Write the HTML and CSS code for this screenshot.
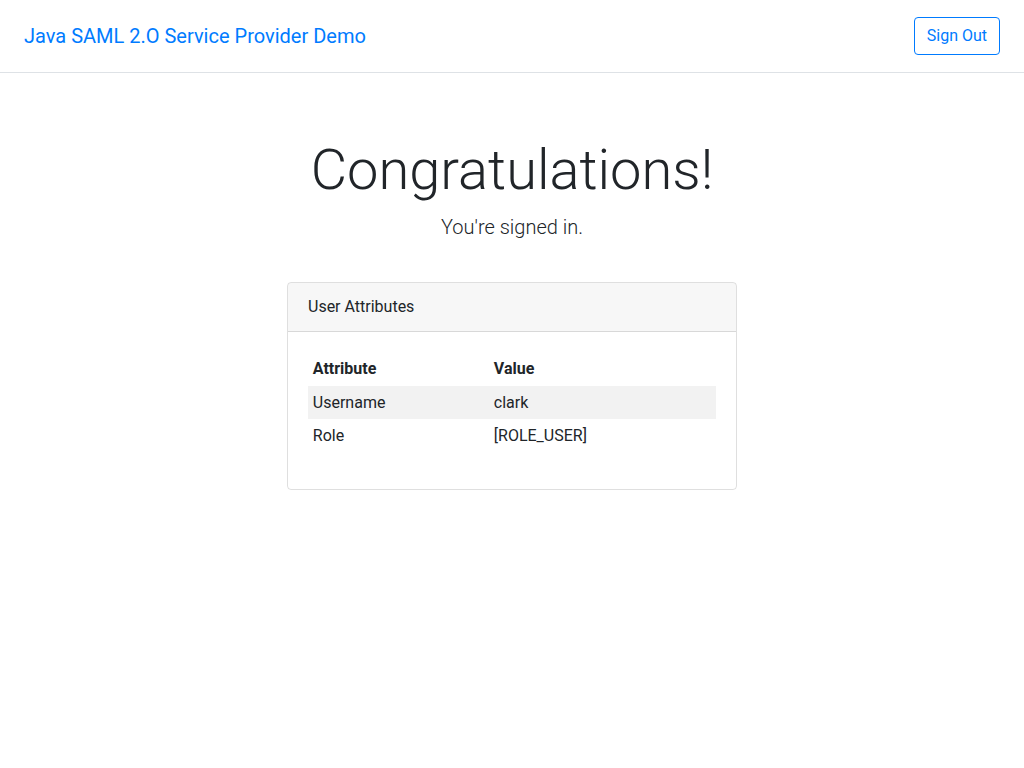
FILE: index.html
```html
<!DOCTYPE html>
<html lang="en">
<head>
<meta charset="utf-8">
<title>Java SAML 2.0 Service Provider Demo</title>
<link rel="stylesheet" href="styles.css">
</head>
<body>
<nav class="navbar">
  <a class="brand" href="#">Java SAML 2.O Service Provider Demo</a>
  <button class="btn-outline">Sign Out</button>
</nav>
<main class="main">
  <h1 class="display">Congratulations!</h1>
  <p class="lead">You're signed in.</p>
  <div class="card">
    <div class="card-header">User Attributes</div>
    <div class="card-body">
      <table class="table">
        <thead>
          <tr><th class="col-attr">Attribute</th><th>Value</th></tr>
        </thead>
        <tbody>
          <tr class="striped"><td>Username</td><td>clark</td></tr>
          <tr><td>Role</td><td>[ROLE_USER]</td></tr>
        </tbody>
      </table>
    </div>
  </div>
</main>
</body>
</html>
```
FILE: styles.css
```css
* { box-sizing: border-box; }
body {
  margin: 0;
  font-family: Roboto, "Liberation Sans", sans-serif;
  font-size: 16px;
  line-height: 1.5;
  color: #212529;
  background: #fff;
}
.navbar {
  display: flex;
  align-items: center;
  justify-content: space-between;
  padding: 16px 24px;
  border-bottom: 1px solid #dee2e6;
}
.brand {
  font-size: 20px;
  line-height: 30px;
  padding: 5px 0;
  color: #007bff;
  text-decoration: none;
}
.btn-outline {
  font-family: inherit;
  font-size: 16px;
  line-height: 24px;
  padding: 6px 12px;
  color: #007bff;
  background: transparent;
  border: 1px solid #007bff;
  border-radius: 4px;
}
.main {
  display: flex;
  flex-direction: column;
  align-items: center;
  padding-top: 64px;
}
.display {
  margin: 0 0 8px;
  font-size: 56px;
  font-weight: 300;
  line-height: 1.2;
}
.lead {
  margin: 0 0 40px;
  font-size: 20px;
  font-weight: 300;
  line-height: 30px;
}
.card {
  width: 450px;
  border: 1px solid rgba(0,0,0,.125);
  border-radius: 4px;
  overflow: hidden;
}
.card-header {
  padding: 12px 20px;
  background: rgba(0,0,0,.03);
  border-bottom: 1px solid rgba(0,0,0,.125);
}
.card-body {
  padding: 20px;
}
.table {
  width: 100%;
  border-collapse: collapse;
  margin-bottom: 16px;
}
.table th, .table td {
  text-align: left;
  padding: 4.8px;
  vertical-align: top;
}
.table th { font-weight: 700; }
.col-attr { width: 181px; }
.striped { background: rgba(0,0,0,.05); }
```
